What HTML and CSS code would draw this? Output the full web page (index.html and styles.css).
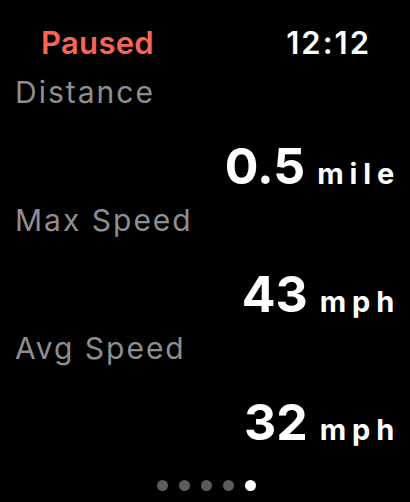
FILE: index.html
```html
<!DOCTYPE html>
<html lang="en">

<head>
    <meta charset="UTF-8">
    <meta name="viewport" content="width=device-width, initial-scale=1.0">
    <title>Workout - Paused</title>
    <link rel="stylesheet" href="styles.css">
</head>

<body>
    <div class="screen">
        <!-- Status bar -->
        <div class="status-bar">
            <span class="status">Paused</span>
            <span class="clock">12:12</span>
        </div>

        <!-- Metrics -->
        <div class="metric">
            <p class="metric-label">Distance</p>
            <div class="metric-value">
                <span class="number">0.5</span>
                <span class="unit">mile</span>
            </div>
        </div>

        <div class="metric">
            <p class="metric-label">Max Speed</p>
            <div class="metric-value">
                <span class="number">43</span>
                <span class="unit">mph</span>
            </div>
        </div>

        <div class="metric">
            <p class="metric-label">Avg Speed</p>
            <div class="metric-value">
                <span class="number">32</span>
                <span class="unit">mph</span>
            </div>
        </div>

        <!-- Page indicator -->
        <div class="pager">
            <span class="dot"></span>
            <span class="dot"></span>
            <span class="dot"></span>
            <span class="dot"></span>
            <span class="dot active"></span>
        </div>
    </div>
</body>

</html>
```

FILE: styles.css
```css
:root {
    --color-bg: #000000;
    --color-text: #ffffff;
    --color-label: #8e8e93;
    --color-paused: #fa6654;
    --color-dot: #5b5b5b;
}

* {
    margin: 0;
    padding: 0;
    box-sizing: border-box;
    font-family: Inter, 'Liberation Sans', sans-serif;
}

body {
    width: 410px;
    height: 502px;
    background-color: var(--color-bg);
    color: var(--color-text);
    overflow: hidden;
}

.screen {
    padding: 25px 10px 0 15px;
}

/* Status bar */
.status-bar {
    display: flex;
    justify-content: space-between;
    padding: 0 29px 0 26px;
    font-size: 31px;
    line-height: 36px;
}

.status {
    color: var(--color-paused);
    font-weight: 600;
    letter-spacing: 0.3px;
}

.clock {
    font-weight: 600;
    letter-spacing: 2px;
}

/* Metric blocks */
.metric {
    margin-top: 13px;
}

.metric + .metric {
    margin-top: 6px;
}

.metric-label {
    color: var(--color-label);
    font-size: 30px;
    line-height: 36px;
    letter-spacing: 2px;
}

.metric-value {
    display: flex;
    justify-content: flex-end;
    align-items: baseline;
    gap: 12px;
    margin-top: 26px;
    height: 60px;
    font-weight: 700;
}

.number {
    font-size: 50px;
    line-height: 60px;
}

.unit {
    font-size: 29px;
    line-height: 29px;
    letter-spacing: 5.8px;
}

/* Page indicator */
.pager {
    display: flex;
    justify-content: center;
    gap: 11px;
    margin-top: 28px;
    padding-right: 3px;
}

.dot {
    width: 11px;
    height: 11px;
    border-radius: 50%;
    background-color: var(--color-dot);
}

.dot.active {
    background-color: var(--color-text);
}
```
